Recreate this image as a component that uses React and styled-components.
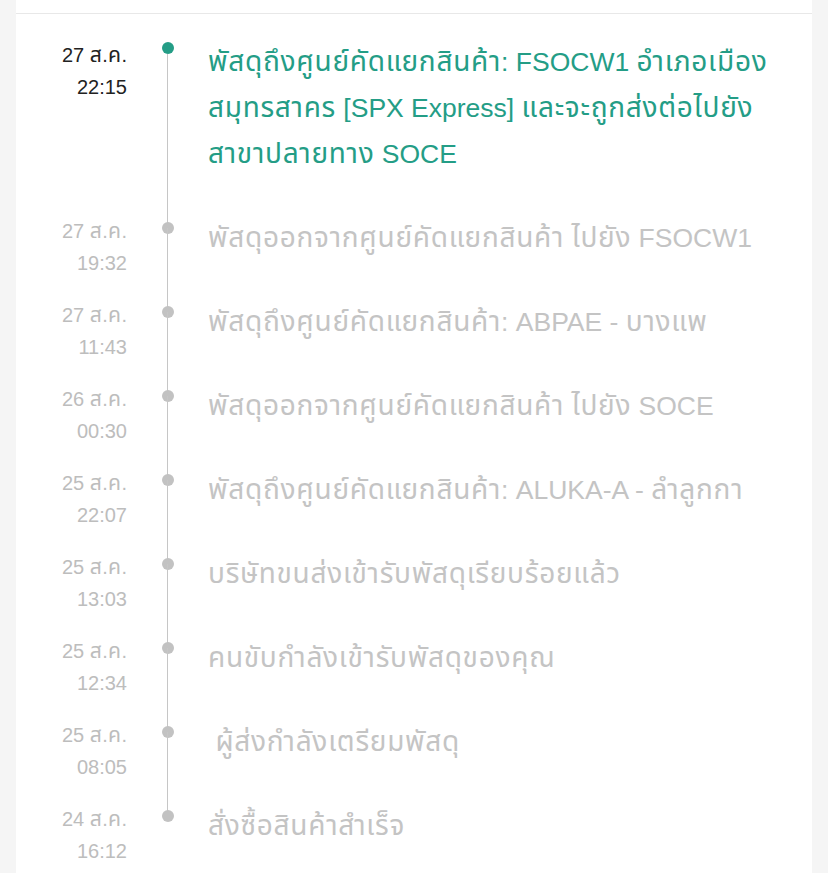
import React from "react";
import styled, { createGlobalStyle } from "styled-components";

const GlobalStyle = createGlobalStyle`
  html, body {
    margin: 0;
    padding: 0;
    background: #f5f5f5;
  }
  body {
    font-family: "Liberation Sans", "Noto Sans Thai", Arial, sans-serif;
    -webkit-font-smoothing: antialiased;
  }
`;

const Page = styled.div`
  width: 828px;
  height: 873px;
  overflow: hidden;
  background: #f5f5f5;
`;

const Card = styled.div`
  margin: 0 16px;
  background: #ffffff;
  min-height: 873px;
`;

const TopStrip = styled.div`
  height: 13px;
  border-bottom: 1px solid #e8e8e8;
`;

const Timeline = styled.ol`
  list-style: none;
  margin: 0;
  padding: 25px 0 0 0;
`;

const Row = styled.li`
  display: grid;
  grid-template-columns: 111px 81px 1fr;
  padding-bottom: 20px;
`;

const DateCol = styled.div`
  text-align: right;
  font-size: 20px;
  line-height: 32px;
  color: ${(p) => (p.$active ? "#222222" : "#bdbdbd")};
`;

const Rail = styled.div`
  position: relative;
  display: flex;
  justify-content: center;
  &::after {
    content: "";
    display: ${(p) => (p.$last ? "none" : "block")};
    position: absolute;
    left: 40px;
    width: 1px;
    top: ${(p) => (p.$active ? "15px" : "13px")};
    bottom: -33px;
    background: #c6c6c6;
  }
`;

const Dot = styled.span`
  display: block;
  width: 12px;
  height: 12px;
  border-radius: 50%;
  margin-top: ${(p) => (p.$active ? "3px" : "7px")};
  background: ${(p) => (p.$active ? "#249d86" : "#c2c2c2")};
`;

const Text = styled.div`
  font-size: 26.5px;
  line-height: 46px;
  padding: 0 20px 18px 0;
  white-space: pre-wrap;
  color: ${(p) => (p.$active ? "#249d86" : "#c4c4c4")};
`;

/* Thai runs are set slightly larger and looser so they take the width of the original's Thai face */
const Thai = styled.span`
  font-family: "Noto Sans Thai", sans-serif;
  font-size: 1.057em;
  letter-spacing: 0.026em;
  line-height: 1;
`;

const THAI_RUN = /([\u0E00-\u0E7F]+)/;

function Mixed({ children }) {
  return children
    .split(THAI_RUN)
    .filter((s) => s !== "")
    .map((s, i) => (THAI_RUN.test(s) ? <Thai key={i}>{s}</Thai> : s));
}

const events = [
  {
    date: "27 ส.ค.",
    time: "22:15",
    text: "พัสดุถึงศูนย์คัดแยกสินค้า: FSOCW1 อำเภอเมืองสมุทรสาคร [SPX Express] และจะถูกส่งต่อไปยังสาขาปลายทาง SOCE",
    active: true,
  },
  { date: "27 ส.ค.", time: "19:32", text: "พัสดุออกจากศูนย์คัดแยกสินค้า ไปยัง FSOCW1" },
  { date: "27 ส.ค.", time: "11:43", text: "พัสดุถึงศูนย์คัดแยกสินค้า: ABPAE - บางแพ" },
  { date: "26 ส.ค.", time: "00:30", text: "พัสดุออกจากศูนย์คัดแยกสินค้า ไปยัง SOCE" },
  { date: "25 ส.ค.", time: "22:07", text: "พัสดุถึงศูนย์คัดแยกสินค้า: ALUKA-A - ลำลูกกา" },
  { date: "25 ส.ค.", time: "13:03", text: "บริษัทขนส่งเข้ารับพัสดุเรียบร้อยแล้ว" },
  { date: "25 ส.ค.", time: "12:34", text: "คนขับกำลังเข้ารับพัสดุของคุณ" },
  { date: "25 ส.ค.", time: "08:05", text: " ผู้ส่งกำลังเตรียมพัสดุ" },
  { date: "24 ส.ค.", time: "16:12", text: "สั่งซื้อสินค้าสำเร็จ" },
];

export default function App() {
  return (
    <Page>
      <GlobalStyle />
      <Card>
        <TopStrip />
        <Timeline>
          {events.map((e, i) => (
            <Row key={i}>
              <DateCol $active={e.active}>
                <Mixed>{e.date}</Mixed>
                <br />
                {e.time}
              </DateCol>
              <Rail $active={e.active} $last={i === events.length - 1}>
                <Dot $active={e.active} />
              </Rail>
              <Text $active={e.active}>
                <Mixed>{e.text}</Mixed>
              </Text>
            </Row>
          ))}
        </Timeline>
      </Card>
    </Page>
  );
}
